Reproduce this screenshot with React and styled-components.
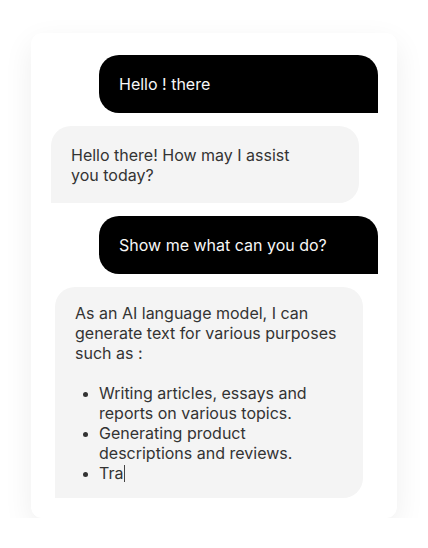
import React from 'react';
import styled, { createGlobalStyle } from 'styled-components';

const GlobalStyle = createGlobalStyle`
  body {
    margin: 0;
    background: #ffffff;
    font-family: Inter, "Noto Sans", sans-serif;
  }
`;

const Page = styled.div`
  padding: 33px 0 0 31px;
`;

const Card = styled.div`
  width: 366px;
  height: 485px;
  box-sizing: border-box;
  padding: 22px 19px 21px 20px;
  background: #fff;
  border-radius: 11px;
  box-shadow: 0 10px 30px rgba(0, 0, 0, 0.07);
  display: flex;
  flex-direction: column;
  gap: 13px;
`;

const Bubble = styled.div`
  box-sizing: border-box;
  font-size: 16px;
  line-height: 20px;
  align-self: ${({ $user }) => ($user ? 'flex-end' : 'flex-start')};
  width: ${({ $user }) => ($user ? '279px' : '308px')};
  margin-left: ${({ $indent }) => $indent || 0}px;
  padding: ${({ $pad }) => $pad || '19px 20px'};
  background: ${({ $user }) => ($user ? '#000' : '#f4f4f4')};
  color: ${({ $user }) => ($user ? '#f7f7f7' : '#333')};
  border-radius: ${({ $user }) => ($user ? '20px 20px 0 20px' : '20px 20px 20px 0')};
`;

const Para = styled.p`
  margin: 0;
`;

const List = styled.ul`
  margin: 20px 0 0;
  padding-left: 24px;

  li::marker {
    font-size: 14px;
  }
`;

const Caret = styled.span`
  display: inline-block;
  width: 1px;
  height: 17px;
  background: #444;
  vertical-align: -3px;
  margin-left: 1px;
`;

export default function App() {
  return (
    <Page>
      <GlobalStyle />
      <Card>
        <Bubble $user>Hello ! there</Bubble>
        <Bubble $pad="19px 60px 18px 20px">
          Hello there! How may I assist you today?
        </Bubble>
        <Bubble $user>Show me what can you do?</Bubble>
        <Bubble $indent={4} $pad="16px 20px 15px">
          <Para>As an AI language model, I can generate text for various purposes such as :</Para>
          <List>
            <li>Writing articles, essays and reports on various topics.</li>
            <li>Generating product descriptions and reviews.</li>
            <li>
              Tra
              <Caret />
            </li>
          </List>
        </Bubble>
      </Card>
    </Page>
  );
}
